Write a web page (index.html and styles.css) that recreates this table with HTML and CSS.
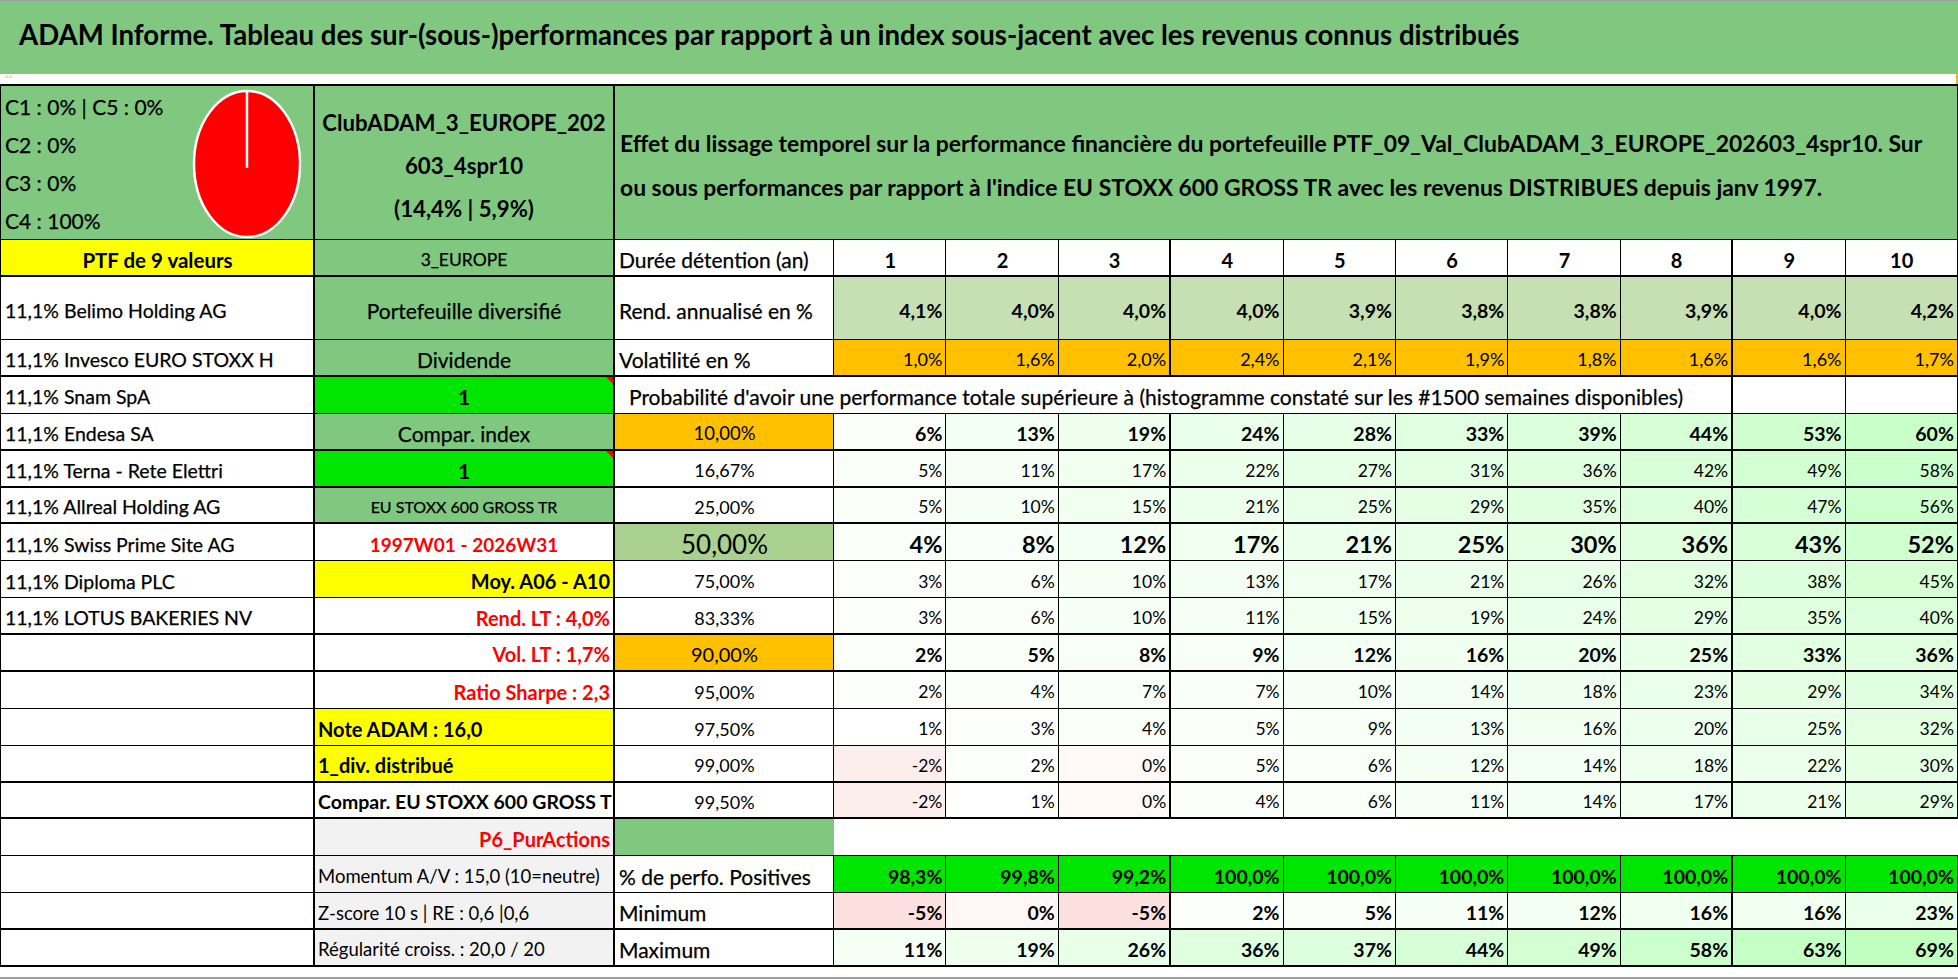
FILE: index.html
```html
<!DOCTYPE html>
<html lang="fr">
<head>
<meta charset="utf-8">
<title>ADAM Informe</title>
<link rel="stylesheet" href="styles.css">
</head>
<body>
<header class="title-band"><h1 class="title">ADAM Informe. Tableau des sur-(sous-)performances par rapport à un index sous-jacent avec les revenus connus distribués</h1></header>
<div class="strip"><span class="strip-dots">˄˄</span><span class="strip-mark"></span></div>
<main class="sheet">
  <div class="row">
    <div class="c ca g hdr-a">
      <div class="hdr-lines">
        <div>C1 : 0% | C5 : 0%</div>
        <div>C2 : 0%</div>
        <div>C3 : 0%</div>
        <div>C4 : 100%</div>
      </div>
      <svg class="pie" width="110" height="150" viewBox="0 0 110 150">
        <ellipse cx="55" cy="75" rx="53" ry="73" fill="#ff0000" stroke="#ffffff" stroke-width="2.5"/>
        <line x1="55" y1="2" x2="55" y2="79" stroke="#ffffff" stroke-width="2.5"/>
      </svg>
    </div>
    <div class="c cb g hdr-b">ClubADAM_3_EUROPE_202<br>603_4spr10<br>(14,4% | 5,9%)</div>
    <div class="c g hdr-c">Effet du lissage temporel sur la performance financière du portefeuille PTF_09_Val_ClubADAM_3_EUROPE_202603_4spr10. Sur<br>ou sous performances par rapport à l'indice EU STOXX 600 GROSS TR avec les revenus DISTRIBUES depuis janv 1997.</div>
  </div>

  <div class="row thick">
    <div class="c ca y mid bold f-ptf">PTF de 9 valeurs</div>
    <div class="c cb g mid f-eu">3_EUROPE</div>
    <div class="c f-lab">Durée détention (an)</div>
    <div class="c mid bold f-hd">1</div>
    <div class="c mid bold f-hd">2</div>
    <div class="c mid bold f-hd sep">3</div>
    <div class="c mid bold f-hd">4</div>
    <div class="c mid bold f-hd">5</div>
    <div class="c mid bold f-hd">6</div>
    <div class="c mid bold f-hd">7</div>
    <div class="c mid bold f-hd sep">8</div>
    <div class="c mid bold f-hd">9</div>
    <div class="c mid bold f-hd">10</div>
  </div>

  <div class="row">
    <div class="c ca f-name">11,1% Belimo Holding AG</div>
    <div class="c cb g mid f-lab">Portefeuille diversifié</div>
    <div class="c f-lab">Rend. annualisé en %</div>
    <div class="c num gl bold f-rend">4,1%</div>
    <div class="c num gl bold f-rend">4,0%</div>
    <div class="c num gl bold f-rend sep">4,0%</div>
    <div class="c num gl bold f-rend">4,0%</div>
    <div class="c num gl bold f-rend">3,9%</div>
    <div class="c num gl bold f-rend">3,8%</div>
    <div class="c num gl bold f-rend">3,8%</div>
    <div class="c num gl bold f-rend sep">3,9%</div>
    <div class="c num gl bold f-rend">4,0%</div>
    <div class="c num gl bold f-rend">4,2%</div>
  </div>

  <div class="row thick">
    <div class="c ca f-name">11,1% Invesco EURO STOXX H</div>
    <div class="c cb g mid f-lab">Dividende</div>
    <div class="c f-lab">Volatilité en %</div>
    <div class="c num o f-vol">1,0%</div>
    <div class="c num o f-vol">1,6%</div>
    <div class="c num o f-vol sep">2,0%</div>
    <div class="c num o f-vol">2,4%</div>
    <div class="c num o f-vol">2,1%</div>
    <div class="c num o f-vol">1,9%</div>
    <div class="c num o f-vol">1,8%</div>
    <div class="c num o f-vol sep">1,6%</div>
    <div class="c num o f-vol">1,6%</div>
    <div class="c num o f-vol">1,7%</div>
  </div>

  <div class="row">
    <div class="c ca f-name">11,1% Snam SpA</div>
    <div class="c cb gb mid bold f-one note">1</div>
    <div class="c prob sep f-lab">Probabilité d'avoir une performance totale supérieure à (histogramme constaté sur les #1500 semaines disponibles)</div>
    <div class="c"></div>
    <div class="c"></div>
  </div>

  <div class="row thick">
    <div class="c ca f-name">11,1% Endesa SA</div>
    <div class="c cb g mid f-lab">Compar. index</div>
    <div class="c o mid f-p10">10,00%</div>
    <div class="c num bold f-numb" style="background:#FAFFFA">6%</div>
    <div class="c num bold f-numb" style="background:#F3FFF3">13%</div>
    <div class="c num bold f-numb sep" style="background:#EEFFEE">19%</div>
    <div class="c num bold f-numb" style="background:#E9FFE9">24%</div>
    <div class="c num bold f-numb" style="background:#E6FFE6">28%</div>
    <div class="c num bold f-numb" style="background:#E1FFE1">33%</div>
    <div class="c num bold f-numb" style="background:#DCFFDC">39%</div>
    <div class="c num bold f-numb sep" style="background:#D7FFD7">44%</div>
    <div class="c num bold f-numb" style="background:#CFFFCF">53%</div>
    <div class="c num bold f-numb" style="background:#C9FFC9">60%</div>
  </div>

  <div class="row thick">
    <div class="c ca f-name">11,1% Terna - Rete Elettri</div>
    <div class="c cb gb mid bold f-one note">1</div>
    <div class="c mid f-pct">16,67%</div>
    <div class="c num f-num" style="background:#FAFFFA">5%</div>
    <div class="c num f-num" style="background:#F5FFF5">11%</div>
    <div class="c num f-num sep" style="background:#F0FFF0">17%</div>
    <div class="c num f-num" style="background:#EBFFEB">22%</div>
    <div class="c num f-num" style="background:#E7FFE7">27%</div>
    <div class="c num f-num" style="background:#E3FFE3">31%</div>
    <div class="c num f-num" style="background:#DFFFDF">36%</div>
    <div class="c num f-num sep" style="background:#D9FFD9">42%</div>
    <div class="c num f-num" style="background:#D3FFD3">49%</div>
    <div class="c num f-num" style="background:#CBFFCB">58%</div>
  </div>

  <div class="row thick">
    <div class="c ca f-name">11,1% Allreal Holding AG</div>
    <div class="c cb g mid f-eu2">EU STOXX 600 GROSS TR</div>
    <div class="c mid f-pct">25,00%</div>
    <div class="c num f-num" style="background:#FAFFFA">5%</div>
    <div class="c num f-num" style="background:#F6FFF6">10%</div>
    <div class="c num f-num sep" style="background:#F1FFF1">15%</div>
    <div class="c num f-num" style="background:#ECFFEC">21%</div>
    <div class="c num f-num" style="background:#E8FFE8">25%</div>
    <div class="c num f-num" style="background:#E5FFE5">29%</div>
    <div class="c num f-num" style="background:#DFFFDF">35%</div>
    <div class="c num f-num sep" style="background:#DBFFDB">40%</div>
    <div class="c num f-num" style="background:#D5FFD5">47%</div>
    <div class="c num f-num" style="background:#CDFFCD">56%</div>
  </div>

  <div class="row">
    <div class="c ca f-name">11,1% Swiss Prime Site AG</div>
    <div class="c cb mid red bold f-date">1997W01 - 2026W31</div>
    <div class="c gm mid f-p50">50,00%</div>
    <div class="c num bold f-big" style="background:#FBFFFB">4%</div>
    <div class="c num bold f-big" style="background:#F8FFF8">8%</div>
    <div class="c num bold f-big sep" style="background:#F4FFF4">12%</div>
    <div class="c num bold f-big" style="background:#F0FFF0">17%</div>
    <div class="c num bold f-big" style="background:#ECFFEC">21%</div>
    <div class="c num bold f-big" style="background:#E8FFE8">25%</div>
    <div class="c num bold f-big" style="background:#E4FFE4">30%</div>
    <div class="c num bold f-big sep" style="background:#DFFFDF">36%</div>
    <div class="c num bold f-big" style="background:#D8FFD8">43%</div>
    <div class="c num bold f-big" style="background:#D0FFD0">52%</div>
  </div>

  <div class="row">
    <div class="c ca f-name">11,1% Diploma PLC</div>
    <div class="c cb y num bold f-red">Moy. A06 - A10</div>
    <div class="c mid f-pct">75,00%</div>
    <div class="c num f-num" style="background:#FCFFFC">3%</div>
    <div class="c num f-num" style="background:#FAFFFA">6%</div>
    <div class="c num f-num sep" style="background:#F6FFF6">10%</div>
    <div class="c num f-num" style="background:#F3FFF3">13%</div>
    <div class="c num f-num" style="background:#F0FFF0">17%</div>
    <div class="c num f-num" style="background:#ECFFEC">21%</div>
    <div class="c num f-num" style="background:#E8FFE8">26%</div>
    <div class="c num f-num sep" style="background:#E2FFE2">32%</div>
    <div class="c num f-num" style="background:#DDFFDD">38%</div>
    <div class="c num f-num" style="background:#D6FFD6">45%</div>
  </div>

  <div class="row thick">
    <div class="c ca f-name">11,1% LOTUS BAKERIES NV</div>
    <div class="c cb num red bold f-red">Rend. LT : 4,0%</div>
    <div class="c mid f-pct">83,33%</div>
    <div class="c num f-num" style="background:#FCFFFC">3%</div>
    <div class="c num f-num" style="background:#FAFFFA">6%</div>
    <div class="c num f-num sep" style="background:#F6FFF6">10%</div>
    <div class="c num f-num" style="background:#F5FFF5">11%</div>
    <div class="c num f-num" style="background:#F1FFF1">15%</div>
    <div class="c num f-num" style="background:#EEFFEE">19%</div>
    <div class="c num f-num" style="background:#E9FFE9">24%</div>
    <div class="c num f-num sep" style="background:#E5FFE5">29%</div>
    <div class="c num f-num" style="background:#DFFFDF">35%</div>
    <div class="c num f-num" style="background:#DBFFDB">40%</div>
  </div>

  <div class="row thick">
    <div class="c ca"></div>
    <div class="c cb num red bold f-red">Vol. LT : 1,7%</div>
    <div class="c o mid f-p90">90,00%</div>
    <div class="c num bold f-numb" style="background:#FDFFFD">2%</div>
    <div class="c num bold f-numb" style="background:#FAFFFA">5%</div>
    <div class="c num bold f-numb sep" style="background:#F8FFF8">8%</div>
    <div class="c num bold f-numb" style="background:#F7FFF7">9%</div>
    <div class="c num bold f-numb" style="background:#F4FFF4">12%</div>
    <div class="c num bold f-numb" style="background:#F1FFF1">16%</div>
    <div class="c num bold f-numb" style="background:#EDFFED">20%</div>
    <div class="c num bold f-numb sep" style="background:#E8FFE8">25%</div>
    <div class="c num bold f-numb" style="background:#E1FFE1">33%</div>
    <div class="c num bold f-numb" style="background:#DFFFDF">36%</div>
  </div>

  <div class="row">
    <div class="c ca"></div>
    <div class="c cb num red bold f-red">Ratio Sharpe : 2,3</div>
    <div class="c mid f-pct">95,00%</div>
    <div class="c num f-num" style="background:#FDFFFD">2%</div>
    <div class="c num f-num" style="background:#FBFFFB">4%</div>
    <div class="c num f-num sep" style="background:#F9FFF9">7%</div>
    <div class="c num f-num" style="background:#F9FFF9">7%</div>
    <div class="c num f-num" style="background:#F6FFF6">10%</div>
    <div class="c num f-num" style="background:#F2FFF2">14%</div>
    <div class="c num f-num" style="background:#EFFFEF">18%</div>
    <div class="c num f-num sep" style="background:#EAFFEA">23%</div>
    <div class="c num f-num" style="background:#E5FFE5">29%</div>
    <div class="c num f-num" style="background:#E0FFE0">34%</div>
  </div>

  <div class="row">
    <div class="c ca"></div>
    <div class="c cb y bold f-red">Note ADAM : 16,0</div>
    <div class="c mid f-pct">97,50%</div>
    <div class="c num f-num" style="background:#FEFFFE">1%</div>
    <div class="c num f-num" style="background:#FCFFFC">3%</div>
    <div class="c num f-num sep" style="background:#FBFFFB">4%</div>
    <div class="c num f-num" style="background:#FAFFFA">5%</div>
    <div class="c num f-num" style="background:#F7FFF7">9%</div>
    <div class="c num f-num" style="background:#F3FFF3">13%</div>
    <div class="c num f-num" style="background:#F1FFF1">16%</div>
    <div class="c num f-num sep" style="background:#EDFFED">20%</div>
    <div class="c num f-num" style="background:#E8FFE8">25%</div>
    <div class="c num f-num" style="background:#E2FFE2">32%</div>
  </div>

  <div class="row thick">
    <div class="c ca"></div>
    <div class="c cb y bold f-red">1_div. distribué</div>
    <div class="c mid f-pct">99,00%</div>
    <div class="c num f-num" style="background:#FDEEEE">-2%</div>
    <div class="c num f-num" style="background:#FDFFFD">2%</div>
    <div class="c num f-num sep" style="background:#FFF9F9">0%</div>
    <div class="c num f-num" style="background:#FAFFFA">5%</div>
    <div class="c num f-num" style="background:#FAFFFA">6%</div>
    <div class="c num f-num" style="background:#F4FFF4">12%</div>
    <div class="c num f-num" style="background:#F2FFF2">14%</div>
    <div class="c num f-num sep" style="background:#EFFFEF">18%</div>
    <div class="c num f-num" style="background:#EBFFEB">22%</div>
    <div class="c num f-num" style="background:#E4FFE4">30%</div>
  </div>

  <div class="row thick">
    <div class="c ca"></div>
    <div class="c cb bold f-cmp">Compar. EU STOXX 600 GROSS TR</div>
    <div class="c mid f-pct">99,50%</div>
    <div class="c num f-num" style="background:#FDEEEE">-2%</div>
    <div class="c num f-num" style="background:#FEFFFE">1%</div>
    <div class="c num f-num sep" style="background:#FFF9F9">0%</div>
    <div class="c num f-num" style="background:#FBFFFB">4%</div>
    <div class="c num f-num" style="background:#FAFFFA">6%</div>
    <div class="c num f-num" style="background:#F5FFF5">11%</div>
    <div class="c num f-num" style="background:#F2FFF2">14%</div>
    <div class="c num f-num sep" style="background:#F0FFF0">17%</div>
    <div class="c num f-num" style="background:#ECFFEC">21%</div>
    <div class="c num f-num" style="background:#E5FFE5">29%</div>
  </div>

  <div class="row">
    <div class="c ca"></div>
    <div class="c cb gray num red bold f-red">P6_PurActions</div>
    <div class="c g open"></div>
    <div class="c blank open"></div>
  </div>

  <div class="row">
    <div class="c ca"></div>
    <div class="c cb gray f-mom">Momentum A/V : 15,0 (10=neutre)</div>
    <div class="c f-lab">% de perfo. Positives</div>
    <div class="c num gb bold f-numb">98,3%</div>
    <div class="c num gb bold f-numb">99,8%</div>
    <div class="c num gb bold f-numb sep">99,2%</div>
    <div class="c num gb bold f-numb">100,0%</div>
    <div class="c num gb bold f-numb">100,0%</div>
    <div class="c num gb bold f-numb">100,0%</div>
    <div class="c num gb bold f-numb">100,0%</div>
    <div class="c num gb bold f-numb sep">100,0%</div>
    <div class="c num gb bold f-numb">100,0%</div>
    <div class="c num gb bold f-numb">100,0%</div>
  </div>

  <div class="row thick">
    <div class="c ca"></div>
    <div class="c cb gray f-mom">Z-score 10 s | RE : 0,6 |0,6</div>
    <div class="c f-lab">Minimum</div>
    <div class="c num bold f-numb" style="background:#FCE0E0">-5%</div>
    <div class="c num bold f-numb" style="background:#FFF7F7">0%</div>
    <div class="c num bold f-numb sep" style="background:#FCE0E0">-5%</div>
    <div class="c num bold f-numb" style="background:#FDFFFD">2%</div>
    <div class="c num bold f-numb" style="background:#FAFFFA">5%</div>
    <div class="c num bold f-numb" style="background:#F5FFF5">11%</div>
    <div class="c num bold f-numb" style="background:#F4FFF4">12%</div>
    <div class="c num bold f-numb sep" style="background:#F1FFF1">16%</div>
    <div class="c num bold f-numb" style="background:#F1FFF1">16%</div>
    <div class="c num bold f-numb" style="background:#EAFFEA">23%</div>
  </div>

  <div class="row thick">
    <div class="c ca"></div>
    <div class="c cb gray f-mom">Régularité croiss. : 20,0 / 20</div>
    <div class="c f-lab">Maximum</div>
    <div class="c num bold f-numb" style="background:#F5FFF5">11%</div>
    <div class="c num bold f-numb" style="background:#EEFFEE">19%</div>
    <div class="c num bold f-numb sep" style="background:#E8FFE8">26%</div>
    <div class="c num bold f-numb" style="background:#DFFFDF">36%</div>
    <div class="c num bold f-numb" style="background:#DEFFDE">37%</div>
    <div class="c num bold f-numb" style="background:#D7FFD7">44%</div>
    <div class="c num bold f-numb" style="background:#D3FFD3">49%</div>
    <div class="c num bold f-numb sep" style="background:#CBFFCB">58%</div>
    <div class="c num bold f-numb" style="background:#C6FFC6">63%</div>
    <div class="c num bold f-numb" style="background:#C1FFC1">69%</div>
  </div>
</main>
<footer class="foot"></footer>
</body>
</html>
```

FILE: styles.css
```css
* { box-sizing: border-box; }

html, body {
  margin: 0;
  padding: 0;
  background: #ffffff;
}

body {
  width: 1958px;
  height: 979px;
  overflow: hidden;
  font-family: Lato, "Open Sans", "Liberation Sans", sans-serif;
  color: #000000;
}

.title-band {
  height: 74px;
  border-top: 1px solid #9c9c9c;
  background: #80c880;
  display: flex;
  align-items: center;
  padding: 0 0 6px 19px;
}

.title {
  margin: 0;
  font-size: 27.6px;
  font-weight: 700;
  white-space: nowrap;
}

.strip {
  height: 10px;
  display: flex;
  justify-content: space-between;
  align-items: flex-start;
}

.strip-dots {
  font-size: 8px;
  line-height: 8px;
  color: #e0a020;
  padding-left: 5px;
}

.strip-mark {
  width: 2px;
  height: 10px;
  background: #f0b020;
}

.sheet {
  display: grid;
  grid-template-columns: 314px 300px 219px repeat(10, 112.4px);
  grid-template-rows: 154px 37px 63px repeat(17, 36.88px);
  border-top: 2px solid #000000;
  border-left: 1px solid #000000;
}

.row { display: contents; }

.c {
  position: relative;
  min-width: 0;
  display: flex;
  align-items: center;
  padding: 4px 3px 0 4px;
  border-right: 1px solid #000000;
  border-bottom: 1px solid #000000;
  overflow: hidden;
  white-space: nowrap;
  font-size: 18px;
}

.row.thick > .c { border-bottom-width: 2px; }

.ca, .cb { border-right-width: 2px; }
.cb { padding-left: 3px; }
.sep { border-right-width: 2px; }

.num { justify-content: flex-end; padding-right: 3px; }
.mid { justify-content: center; }
.bold { font-weight: 700; }

/* fills */
.g { background: #80c880; }
.gl { background: #c6e0b4; }
.gm { background: #a9d08e; }
.gb { background: #00e600; }
.y { background: #ffff00; }
.o { background: #ffc000; }
.gray { background: #f2f2f2; }
.red { color: #ff0000; }

/* header block */
.hdr-a {
  justify-content: space-between;
  align-items: center;
  padding: 3px 11px 0 4px;
}

.hdr-lines {
  font-size: 21px;
  line-height: 38.2px;
  -webkit-text-stroke: 0.25px #000000;
}

.pie { display: block; flex: none; }

.hdr-b {
  flex-direction: column;
  justify-content: center;
  text-align: center;
  font-size: 22.2px;
  font-weight: 700;
  line-height: 43px;
  padding-top: 6px;
}

.hdr-c {
  grid-column: span 11;
  display: block;
  align-self: stretch;
  padding: 35px 0 0 5px;
  font-size: 22.9px;
  font-weight: 700;
  line-height: 44px;
}

.prob {
  grid-column: span 9;
  padding-left: 14px;
}

.open { border-right: 0; }
.blank { grid-column: span 10; }

.note::after {
  content: "";
  position: absolute;
  top: 0;
  right: 0;
  width: 0;
  height: 0;
  border-left: 7px solid transparent;
  border-top: 7px solid #ff0000;
}

/* type sizes */
.f-ptf { font-size: 20.5px; }
.f-eu { font-size: 17.5px; -webkit-text-stroke: 0.25px #000000; }
.f-eu2 { font-size: 16px; -webkit-text-stroke: 0.25px #000000; }
.f-lab { font-size: 21px; -webkit-text-stroke: 0.25px #000000; }
.f-name { font-size: 19.5px; -webkit-text-stroke: 0.25px #000000; }
.f-one { font-size: 21px; }
.f-hd { font-size: 20px; }
.f-rend { font-size: 19.5px; }
.f-vol { font-size: 18px; }
.f-num { font-size: 17.5px; }
.f-numb { font-size: 19.5px; }
.f-big { font-size: 23.5px; }
.f-pct { font-size: 18px; }
.f-p10 { font-size: 18.5px; }
.f-p90 { font-size: 20px; }
.f-p50 { font-size: 26px; }
.f-red { font-size: 20px; }
.f-cmp { font-size: 19.5px; }
.f-date { font-size: 19px; }
.f-mom { font-size: 18.5px; }

.foot {
  height: 12px;
  border-bottom: 2px solid #a0a0a0;
}
```
